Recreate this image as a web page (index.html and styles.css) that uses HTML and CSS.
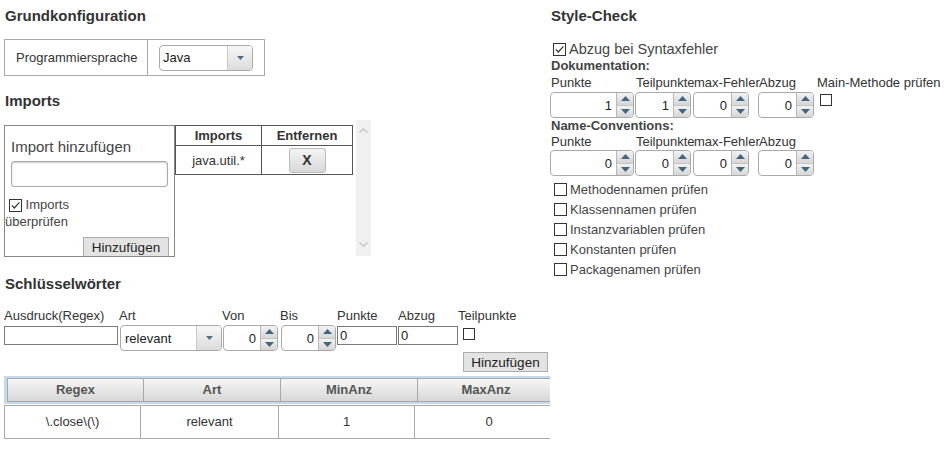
FILE: index.html
```html
<!DOCTYPE html>
<html lang="de">
<head>
  <meta charset="UTF-8" />
  <title>Aufgabe konfigurieren</title>
  <link rel="stylesheet" href="styles.css">
</head>
<body>
  <div class="page">
    <div class="col-left">
      <h3 class="section-title">Grundkonfiguration</h3>
      <div class="config-box">
        <div class="config-label">Programmiersprache</div>
        <div class="config-value">
          <span class="select select-lang">
            <span class="select-text">Java</span>
            <span class="select-btn"><svg width="7" height="4" viewBox="0 0 7 4"><path d="M0 0H7L3.5 4Z" fill="#4d6f88"/></svg></span>
          </span>
        </div>
      </div>

      <h3 class="section-title title-imports">Imports</h3>
      <div class="imports">
        <div class="import-add">
          <div class="import-title">Import hinzufügen</div>
          <input class="import-input" type="text">
          <div class="import-check">
            <span class="cb"><svg width="11" height="11" viewBox="0 0 11 11"><path d="M1.8 5.4L4.3 8L9.4 2.4" fill="none" stroke="#333" stroke-width="1.2"/></svg></span>
            Imports<br>überprüfen
          </div>
          <button class="btn btn-import">Hinzufügen</button>
        </div>
        <table class="import-table">
          <tr><th class="col-import">Imports</th><th>Entfernen</th></tr>
          <tr><td>java.util.*</td><td><button class="btn-remove">X</button></td></tr>
        </table>
        <div class="scrollbar">
          <svg width="9" height="5" viewBox="0 0 9 5"><path d="M0.5 4.5L4.5 0.8L8.5 4.5" fill="none" stroke="#c3c3c3" stroke-width="1.3"/></svg>
          <svg width="9" height="5" viewBox="0 0 9 5"><path d="M0.5 0.5L4.5 4.2L8.5 0.5" fill="none" stroke="#c3c3c3" stroke-width="1.3"/></svg>
        </div>
      </div>

      <h3 class="section-title title-keywords">Schlüsselwörter</h3>
      <div class="kw-form">
        <span class="kw-label">Ausdruck(Regex)</span>
        <span class="kw-label">Art</span>
        <span class="kw-label">Von</span>
        <span class="kw-label">Bis</span>
        <span class="kw-label">Punkte</span>
        <span class="kw-label">Abzug</span>
        <span class="kw-label">Teilpunkte</span>

        <input class="text-input input-regex" type="text">
        <span class="select select-art">
          <span class="select-text">relevant</span>
          <span class="select-btn"><svg width="7" height="4" viewBox="0 0 7 4"><path d="M0 0H7L3.5 4Z" fill="#4d6f88"/></svg></span>
        </span>
        <span class="spinner spinner-kw">
          <input class="spinner-input" value="0">
          <span class="spinner-btns">
            <span class="spin"><svg width="9" height="5" viewBox="0 0 9 5"><path d="M0 5H9L4.5 0Z" fill="#42657f"/></svg></span>
            <span class="spin"><svg width="9" height="5" viewBox="0 0 9 5"><path d="M0 0H9L4.5 5Z" fill="#42657f"/></svg></span>
          </span>
        </span>
        <span class="spinner spinner-kw">
          <input class="spinner-input" value="0">
          <span class="spinner-btns">
            <span class="spin"><svg width="9" height="5" viewBox="0 0 9 5"><path d="M0 5H9L4.5 0Z" fill="#42657f"/></svg></span>
            <span class="spin"><svg width="9" height="5" viewBox="0 0 9 5"><path d="M0 0H9L4.5 5Z" fill="#42657f"/></svg></span>
          </span>
        </span>
        <input class="text-input input-small" type="text" value="0">
        <input class="text-input input-small" type="text" value="0">
        <span class="cb cb-kw"></span>
      </div>
      <div class="kw-actions">
        <button class="btn btn-kw">Hinzufügen</button>
      </div>

      <div class="kw-table">
        <div class="kw-head">
          <div class="kw-th">Regex</div>
          <div class="kw-th">Art</div>
          <div class="kw-th">MinAnz</div>
          <div class="kw-th">MaxAnz</div>
        </div>
        <div class="kw-row">
          <div class="kw-td td-1">\.close\(\)</div>
          <div class="kw-td td-2">relevant</div>
          <div class="kw-td td-3">1</div>
          <div class="kw-td td-4">0</div>
        </div>
      </div>
    </div>

    <div class="col-right">
      <h3 class="section-title">Style-Check</h3>
      <div class="syntax-row">
        <span class="cb"><svg width="11" height="11" viewBox="0 0 11 11"><path d="M1.8 5.4L4.3 8L9.4 2.4" fill="none" stroke="#333" stroke-width="1.2"/></svg></span>
        Abzug bei Syntaxfehler
      </div>

      <div class="sub-title">Dokumentation:</div>
      <div class="param-grid param-grid--doc">
        <span class="param-label">Punkte</span>
        <span class="param-label">Teilpunkte</span>
        <span class="param-label">max-Fehler</span>
        <span class="param-label">Abzug</span>
        <span class="param-label">Main-Methode prüfen</span>

        <span class="spinner spinner-wide">
          <input class="spinner-input" value="1">
          <span class="spinner-btns">
            <span class="spin"><svg width="9" height="5" viewBox="0 0 9 5"><path d="M0 5H9L4.5 0Z" fill="#42657f"/></svg></span>
            <span class="spin"><svg width="9" height="5" viewBox="0 0 9 5"><path d="M0 0H9L4.5 5Z" fill="#42657f"/></svg></span>
          </span>
        </span>
        <span class="spinner">
          <input class="spinner-input" value="1">
          <span class="spinner-btns">
            <span class="spin"><svg width="9" height="5" viewBox="0 0 9 5"><path d="M0 5H9L4.5 0Z" fill="#42657f"/></svg></span>
            <span class="spin"><svg width="9" height="5" viewBox="0 0 9 5"><path d="M0 0H9L4.5 5Z" fill="#42657f"/></svg></span>
          </span>
        </span>
        <span class="spinner">
          <input class="spinner-input" value="0">
          <span class="spinner-btns">
            <span class="spin"><svg width="9" height="5" viewBox="0 0 9 5"><path d="M0 5H9L4.5 0Z" fill="#42657f"/></svg></span>
            <span class="spin"><svg width="9" height="5" viewBox="0 0 9 5"><path d="M0 0H9L4.5 5Z" fill="#42657f"/></svg></span>
          </span>
        </span>
        <span class="spinner">
          <input class="spinner-input" value="0">
          <span class="spinner-btns">
            <span class="spin"><svg width="9" height="5" viewBox="0 0 9 5"><path d="M0 5H9L4.5 0Z" fill="#42657f"/></svg></span>
            <span class="spin"><svg width="9" height="5" viewBox="0 0 9 5"><path d="M0 0H9L4.5 5Z" fill="#42657f"/></svg></span>
          </span>
        </span>
        <span class="cb cb-main"></span>
      </div>

      <div class="sub-title">Name-Conventions:</div>
      <div class="param-grid">
        <span class="param-label">Punkte</span>
        <span class="param-label">Teilpunkte</span>
        <span class="param-label">max-Fehler</span>
        <span class="param-label">Abzug</span>
        <span></span>

        <span class="spinner spinner-wide">
          <input class="spinner-input" value="0">
          <span class="spinner-btns">
            <span class="spin"><svg width="9" height="5" viewBox="0 0 9 5"><path d="M0 5H9L4.5 0Z" fill="#42657f"/></svg></span>
            <span class="spin"><svg width="9" height="5" viewBox="0 0 9 5"><path d="M0 0H9L4.5 5Z" fill="#42657f"/></svg></span>
          </span>
        </span>
        <span class="spinner">
          <input class="spinner-input" value="0">
          <span class="spinner-btns">
            <span class="spin"><svg width="9" height="5" viewBox="0 0 9 5"><path d="M0 5H9L4.5 0Z" fill="#42657f"/></svg></span>
            <span class="spin"><svg width="9" height="5" viewBox="0 0 9 5"><path d="M0 0H9L4.5 5Z" fill="#42657f"/></svg></span>
          </span>
        </span>
        <span class="spinner">
          <input class="spinner-input" value="0">
          <span class="spinner-btns">
            <span class="spin"><svg width="9" height="5" viewBox="0 0 9 5"><path d="M0 5H9L4.5 0Z" fill="#42657f"/></svg></span>
            <span class="spin"><svg width="9" height="5" viewBox="0 0 9 5"><path d="M0 0H9L4.5 5Z" fill="#42657f"/></svg></span>
          </span>
        </span>
        <span class="spinner">
          <input class="spinner-input" value="0">
          <span class="spinner-btns">
            <span class="spin"><svg width="9" height="5" viewBox="0 0 9 5"><path d="M0 5H9L4.5 0Z" fill="#42657f"/></svg></span>
            <span class="spin"><svg width="9" height="5" viewBox="0 0 9 5"><path d="M0 0H9L4.5 5Z" fill="#42657f"/></svg></span>
          </span>
        </span>
      </div>

      <div class="check-list">
        <div class="check-row"><span class="cb"></span>Methodennamen prüfen</div>
        <div class="check-row"><span class="cb"></span>Klassennamen prüfen</div>
        <div class="check-row"><span class="cb"></span>Instanzvariablen prüfen</div>
        <div class="check-row"><span class="cb"></span>Konstanten prüfen</div>
        <div class="check-row"><span class="cb"></span>Packagenamen prüfen</div>
      </div>
    </div>
  </div>
</body>
</html>
```

FILE: styles.css
```css
* {
  box-sizing: border-box;
  margin: 0;
  padding: 0;
}

body {
  font-family: "Liberation Sans", Arial, sans-serif;
  font-size: 13px;
  color: #333;
  background: #fff;
}

input,
button {
  font-family: inherit;
  color: #222;
}

.page {
  display: flex;
  width: 944px;
  height: 452px;
  overflow: hidden;
}

.col-left {
  width: 550px;
  flex-shrink: 0;
  padding-left: 4px;
}

.col-right {
  flex: 1;
}

.section-title {
  font-size: 15px;
  font-weight: bold;
  line-height: 20px;
  margin-top: 6px;
  padding-left: 1px;
  color: #333;
}

.title-imports {
  margin-top: 15px;
}

.title-keywords {
  margin-top: 17px;
}

/* checkbox */
.cb {
  display: inline-flex;
  align-items: center;
  justify-content: center;
  width: 13px;
  height: 13px;
  border: 1px solid #333;
  background: #fff;
  flex-shrink: 0;
}

/* select */
.select {
  display: flex;
  height: 26px;
  border: 1px solid #aaa;
  border-radius: 4px;
  overflow: hidden;
  background: #fff;
}

.select-text {
  flex: 1;
  padding-left: 3px;
  line-height: 24px;
  color: #222;
}

.select-btn {
  width: 25px;
  border-left: 1px solid #c8c8c8;
  background: linear-gradient(#f7f7f7, #dcdcdc);
  display: flex;
  align-items: center;
  justify-content: center;
}

/* spinner */
.spinner {
  display: flex;
  width: 56px;
  height: 26px;
  border: 1px solid #aaa;
  border-radius: 4px;
  overflow: hidden;
  background: #fff;
}

.spinner-wide {
  width: 84px;
}

.spinner-kw {
  width: 55px;
  margin-left: 1px;
}

.spinner-input {
  flex: 1;
  min-width: 0;
  border: none;
  outline: none;
  text-align: right;
  font-size: 13px;
  padding-right: 4px;
  background: transparent;
}

.spinner-btns {
  width: 17px;
  display: flex;
  flex-direction: column;
  border-left: 1px solid #b8b8b8;
}

.spin {
  flex: 1;
  display: flex;
  align-items: center;
  justify-content: center;
  background: linear-gradient(#f2f2f2, #d6d6d6);
}

.spin + .spin {
  border-top: 1px solid #c4c4c4;
}

/* buttons */
.btn {
  height: 19px;
  width: 86px;
  font-size: 13.5px;
  background: #e3e3e3;
  border: 1px solid #adadad;
  color: #222;
}

/* Grundkonfiguration */
.config-box {
  display: flex;
  width: 261px;
  height: 37px;
  margin-top: 13px;
  border: 1px solid #aaa;
}

.config-label {
  width: 143px;
  border-right: 1px solid #aaa;
  display: flex;
  align-items: center;
  padding-left: 11px;
}

.config-value {
  flex: 1;
  display: flex;
  align-items: center;
  padding-left: 11px;
}

.select-lang {
  width: 94px;
}

/* Imports */
.imports {
  display: flex;
  align-items: flex-start;
  height: 137px;
  margin-top: 9px;
}

.import-add {
  width: 171px;
  height: 132px;
  margin-top: 5px;
  border: 1px solid #888;
  display: flex;
  flex-direction: column;
}

.import-title {
  font-size: 15px;
  line-height: 18px;
  margin-top: 12px;
  padding-left: 6px;
  color: #444;
}

.import-input {
  width: 157px;
  height: 26px;
  margin: 5px 0 0 6px;
  border: 1px solid #aaa;
  border-radius: 3px;
  box-shadow: inset 0 1px 2px #ccc;
  outline: none;
}

.import-check {
  margin-top: 9px;
  line-height: 17px;
  color: #444;
}

.import-check .cb {
  margin-left: 4px;
  vertical-align: -2px;
}

.btn-import {
  margin-top: auto;
  align-self: flex-end;
  margin-right: 5px;
  border-bottom: none;
}

.import-table {
  margin-top: 5px;
  width: 178px;
  border-collapse: collapse;
  border: 1px solid #555;
  text-align: center;
}

.import-table th {
  height: 20px;
  border: 1px solid #555;
  font-weight: bold;
}

.import-table .col-import {
  width: 86px;
}

.import-table td {
  height: 29px;
  border: 1px solid #555;
}

.btn-remove {
  width: 37px;
  height: 25px;
  border: 1px solid #bbb;
  border-radius: 3px;
  background: linear-gradient(#f4f4f4, #d8d8d8);
  font-size: 14px;
  font-weight: bold;
  color: #333;
}

.scrollbar {
  width: 15px;
  height: 136px;
  margin-left: 3px;
  background: #f0f0f0;
  display: flex;
  flex-direction: column;
  justify-content: space-between;
  align-items: center;
  padding: 8px 0 9px;
}

/* Schlüsselwörter */
.kw-form {
  display: grid;
  grid-template-columns: 115px 103px 58px 57px 61px 60px auto;
  margin-top: 14px;
  align-items: start;
}

.kw-label {
  line-height: 16px;
  margin-bottom: 1px;
  white-space: nowrap;
  color: #333;
}

.text-input {
  height: 19px;
  margin-top: 1px;
  border: 1px solid #7a7a7a;
  outline: none;
  font-size: 13px;
  padding-left: 2px;
}

.input-regex {
  width: 114px;
}

.input-small {
  width: 60px;
}

.select-art {
  width: 102px;
  margin-left: 1px;
}

.select-art .select-text {
  padding-left: 4px;
  line-height: 26px;
}

.cb-kw {
  width: 12px;
  height: 12px;
  margin: 3px 0 0 5px;
}

.kw-actions {
  display: flex;
  justify-content: flex-end;
  padding-right: 2px;
  margin-top: 1px;
}

.btn-kw {
  width: 85px;
  height: 20px;
}

.kw-table {
  width: 546px;
  margin-top: 4px;
  overflow: hidden;
}

.kw-head {
  display: flex;
  width: 560px;
  background: #c5dbec;
  padding: 2px 0 2px 3px;
}

.kw-th {
  width: 137px;
  height: 24px;
  border: 1px solid #a8a8a8;
  border-left: none;
  background: linear-gradient(#f6f6f6, #d7d7d7);
  text-align: center;
  line-height: 22px;
  font-weight: bold;
  color: #555;
}

.kw-th:first-child {
  border-left: 1px solid #a8a8a8;
}

.kw-row {
  display: flex;
  width: 560px;
  margin-top: 1px;
}

.kw-td {
  height: 34px;
  border: 1px solid #aaa;
  border-left: none;
  text-align: center;
  line-height: 32px;
  color: #333;
}

.td-1 {
  width: 137px;
  border-left: 1px solid #aaa;
}

.td-2 {
  width: 138px;
}

.td-3 {
  width: 136px;
}

.td-4 {
  width: 149px;
}

/* Style-Check */
.syntax-row {
  display: flex;
  align-items: center;
  gap: 3px;
  height: 16px;
  margin-top: 15px;
  padding-left: 3px;
  font-size: 14.5px;
  color: #444;
}

.sub-title {
  font-weight: bold;
  line-height: 16px;
  padding-left: 1px;
  color: #444;
}

.syntax-row + .sub-title {
  margin-top: 1px;
}

.param-grid {
  display: grid;
  grid-template-columns: 85px 58px 65px 58px auto;
  align-items: start;
}

.param-grid--doc {
  margin-top: 1px;
  row-gap: 1px;
}

.param-label {
  line-height: 16px;
  padding-left: 1px;
  white-space: nowrap;
  color: #333;
}

.cb-main {
  width: 12px;
  height: 12px;
  margin: 2px 0 0 4px;
}

.check-list {
  margin-top: 3px;
}

.check-row {
  display: flex;
  align-items: center;
  gap: 3px;
  height: 20px;
  padding-left: 4px;
  color: #444;
}
```
